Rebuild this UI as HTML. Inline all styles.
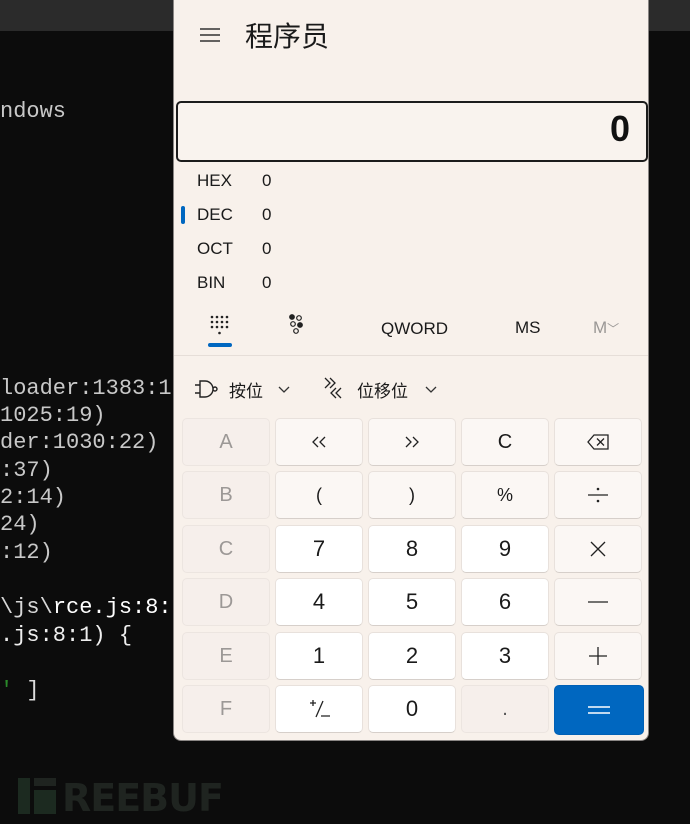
<!DOCTYPE html>
<html><head><meta charset="utf-8"><style>
*{margin:0;padding:0;box-sizing:border-box}
body{width:690px;height:824px;background:#0c0c0c;position:relative;overflow:hidden;font-family:"Liberation Sans","Noto Sans CJK SC",sans-serif}
.top{position:absolute;left:0;top:0;width:690px;height:31px;background:#2b2b2b}
.t{position:absolute;left:0;font-family:"Liberation Mono","DejaVu Sans Mono",monospace;font-size:22px;color:#c8c8c8;white-space:pre;line-height:26px}
.wm{position:absolute;left:16px;top:776px;font:bold 38px "DejaVu Sans","Liberation Sans",sans-serif;color:#1f2420;letter-spacing:-1px}
.win{position:absolute;left:173px;top:0;width:476px;height:741px;background:#f8f1eb;border-radius:0 0 8px 8px;border:1px solid #8a8684;border-top:none}
.a{position:absolute}
.disp{left:2px;top:101px;width:472px;height:61px;border:2px solid #1c1c1c;border-radius:5px;background:#f9f3ee}
.lbl{font-size:17px;color:#1a1a1a}
.b{position:absolute;width:88px;height:48px;border-radius:5px;background:#fbf7f4;border:1px solid #e8e1dc;border-bottom-color:#d6cfca;display:flex;align-items:center;justify-content:center;font-size:20px;color:#1a1a1a}
.w{background:#fff}
.d{background:#f6efeb;color:#9c9896;border-color:#ece5e0}
.eq{background:#0067c0;color:#fff;border-color:#0060b5}
</style></head><body>
<div class="top"></div>
<div class="t" style="top:99px">ndows</div>
<div class="t" style="top:376px">loader:1383:1</div>
<div class="t" style="top:403px">1025:19)</div>
<div class="t" style="top:430px">der:1030:22)</div>
<div class="t" style="top:458px">:37)</div>
<div class="t" style="top:485px">2:14)</div>
<div class="t" style="top:512px">24)</div>
<div class="t" style="top:540px">:12)</div>
<div class="t" style="top:595px;color:#d8d8d8">\js\<span style="color:#fff">rce.js:8:</span></div>
<div class="t" style="top:623px;color:#eee">.js:8:1) {</div>
<div class="t" style="top:678px;color:#ddd"><span style="color:#2a8a2a">'</span> ]</div>
<div class="a" style="left:18px;top:778px;width:12px;height:36px;background:#1c2a20"></div>
<div class="a" style="left:34px;top:778px;width:22px;height:8px;background:#1f2420"></div>
<div class="a" style="left:34px;top:790px;width:22px;height:24px;background:#1c2a20"></div>
<div class="wm" style="left:62px">REEBUF</div>

<div class="win">
 <svg class="a" style="left:25px;top:27px" width="22" height="16"><path d="M1 2H21M1 8H21M1 14H21" stroke="#333" stroke-width="1.6"/></svg>
 <div class="a" style="left:71px;top:15px;font-size:28px;color:#1a1a1a">程序员</div>
 <div class="a disp"></div>
 <div class="a" style="right:18px;top:108px;font-size:36px;font-weight:bold;color:#111">0</div>
 <div class="a lbl" style="left:23px;top:171px">HEX</div><div class="a lbl" style="left:88px;top:171px">0</div>
 <div class="a" style="left:7px;top:206px;width:4px;height:18px;border-radius:2px;background:#0067c0"></div>
 <div class="a lbl" style="left:23px;top:205px">DEC</div><div class="a lbl" style="left:88px;top:205px">0</div>
 <div class="a lbl" style="left:23px;top:239px">OCT</div><div class="a lbl" style="left:88px;top:239px">0</div>
 <div class="a lbl" style="left:23px;top:273px">BIN</div><div class="a lbl" style="left:88px;top:273px">0</div>
 <svg class="a" style="left:36px;top:315px" width="20" height="22"><g fill="#222"><circle cx="2" cy="2" r="1.3"/><circle cx="7" cy="2" r="1.3"/><circle cx="12" cy="2" r="1.3"/><circle cx="17" cy="2" r="1.3"/><circle cx="2" cy="7" r="1.3"/><circle cx="7" cy="7" r="1.3"/><circle cx="12" cy="7" r="1.3"/><circle cx="17" cy="7" r="1.3"/><circle cx="2" cy="12" r="1.3"/><circle cx="7" cy="12" r="1.3"/><circle cx="12" cy="12" r="1.3"/><circle cx="17" cy="12" r="1.3"/><circle cx="9.5" cy="18" r="1.3"/></g></svg>
 <div class="a" style="left:34px;top:343px;width:24px;height:4px;border-radius:2px;background:#0067c0"></div>
 <svg class="a" style="left:114px;top:314px" width="20" height="22"><g stroke="#222" stroke-width="1.2"><circle cx="4" cy="3" r="2.3" fill="#222"/><circle cx="11" cy="4" r="2.3" fill="none"/><circle cx="5" cy="10" r="2.3" fill="none"/><circle cx="12" cy="11" r="2.3" fill="#222"/><circle cx="8" cy="17" r="2.3" fill="none"/></g></svg>
 <div class="a" style="left:207px;top:319px;font-size:17px;color:#1a1a1a">QWORD</div>
 <div class="a" style="left:341px;top:318px;font-size:17px;color:#1a1a1a">MS</div>
 <div class="a" style="left:419px;top:318px;font-size:17px;color:#9a9795">M<span style="font-size:12px">﹀</span></div>
 <div class="a" style="left:0;top:355px;width:474px;height:1px;background:#e6ded8"></div>
 <svg class="a" style="left:20px;top:378px" width="26" height="22"><path d="M1 7H6M1 15H6M6 3V19H11A8 8 0 0 0 11 3Z M19 11A2 2 0 1 0 23 11A2 2 0 1 0 19 11" fill="none" stroke="#222" stroke-width="1.4"/></svg>
 <div class="a" style="left:55px;top:377px;font-size:17px;color:#1a1a1a">按位</div>
 <svg class="a" style="left:104px;top:386px" width="12" height="8"><path d="M1 1L6 6L11 1" fill="none" stroke="#333" stroke-width="1.3"/></svg>
 <svg class="a" style="left:149px;top:376px" width="22" height="26"><path d="M2 2L7 7L2 12M7 2L12 7L7 12M18 12L13 17L18 22M13 12L8 17L13 22" fill="none" stroke="#222" stroke-width="1.3"/></svg>
 <div class="a" style="left:183px;top:377px;font-size:17px;color:#1a1a1a">位移位</div>
 <svg class="a" style="left:251px;top:386px" width="12" height="8"><path d="M1 1L6 6L11 1" fill="none" stroke="#333" stroke-width="1.3"/></svg>
</div>

<div class="b d" style="left:182px;top:418px">A</div>
<div class="b" style="left:275px;top:418px"><svg width="16" height="12"><path d="M7 1L2 6L7 11M14 1L9 6L14 11" fill="none" stroke="#222" stroke-width="1.3"/></svg></div>
<div class="b" style="left:368px;top:418px"><svg width="16" height="12"><path d="M2 1L7 6L2 11M9 1L14 6L9 11" fill="none" stroke="#222" stroke-width="1.3"/></svg></div>
<div class="b" style="left:461px;top:418px">C</div>
<div class="b" style="left:554px;top:418px"><svg width="22" height="16"><path d="M7 1H21V15H7L1 8Z M10 4.5L17 11.5M17 4.5L10 11.5" fill="none" stroke="#222" stroke-width="1.3"/></svg></div>

<div class="b d" style="left:182px;top:471px">B</div>
<div class="b" style="left:275px;top:471px;font-size:18px">(</div>
<div class="b" style="left:368px;top:471px;font-size:18px">)</div>
<div class="b" style="left:461px;top:471px;font-size:18px">%</div>
<div class="b" style="left:554px;top:471px"><svg width="22" height="18"><path d="M1 9H21" stroke="#222" stroke-width="1.3"/><circle cx="11" cy="3" r="1.3" fill="#222"/><circle cx="11" cy="15" r="1.3" fill="#222"/></svg></div>

<div class="b d" style="left:182px;top:525px">C</div>
<div class="b w" style="left:275px;top:525px;font-size:22px">7</div>
<div class="b w" style="left:368px;top:525px;font-size:22px">8</div>
<div class="b w" style="left:461px;top:525px;font-size:22px">9</div>
<div class="b" style="left:554px;top:525px"><svg width="18" height="18"><path d="M2 2L16 16M16 2L2 16" stroke="#222" stroke-width="1.3"/></svg></div>

<div class="b d" style="left:182px;top:578px">D</div>
<div class="b w" style="left:275px;top:578px;font-size:22px">4</div>
<div class="b w" style="left:368px;top:578px;font-size:22px">5</div>
<div class="b w" style="left:461px;top:578px;font-size:22px">6</div>
<div class="b" style="left:554px;top:578px"><svg width="22" height="4"><path d="M1 2H21" stroke="#222" stroke-width="1.3"/></svg></div>

<div class="b d" style="left:182px;top:632px">E</div>
<div class="b w" style="left:275px;top:632px;font-size:22px">1</div>
<div class="b w" style="left:368px;top:632px;font-size:22px">2</div>
<div class="b w" style="left:461px;top:632px;font-size:22px">3</div>
<div class="b" style="left:554px;top:632px"><svg width="20" height="20"><path d="M1 10H19M10 1V19" stroke="#222" stroke-width="1.3"/></svg></div>

<div class="b d" style="left:182px;top:685px">F</div>
<div class="b w" style="left:275px;top:685px"><svg width="26" height="22"><path d="M4 5H10M7 2V8M17 3L10 19M15 18H24" stroke="#222" stroke-width="1.3" fill="none"/></svg></div>
<div class="b w" style="left:368px;top:685px;font-size:22px">0</div>
<div class="b d" style="left:461px;top:685px;color:#555">.</div>
<div class="b eq" style="left:554px;top:685px;width:90px;height:50px"><svg width="24" height="10"><path d="M1 2H23M1 8H23" stroke="#fff" stroke-width="1.6"/></svg></div>
</body></html>
